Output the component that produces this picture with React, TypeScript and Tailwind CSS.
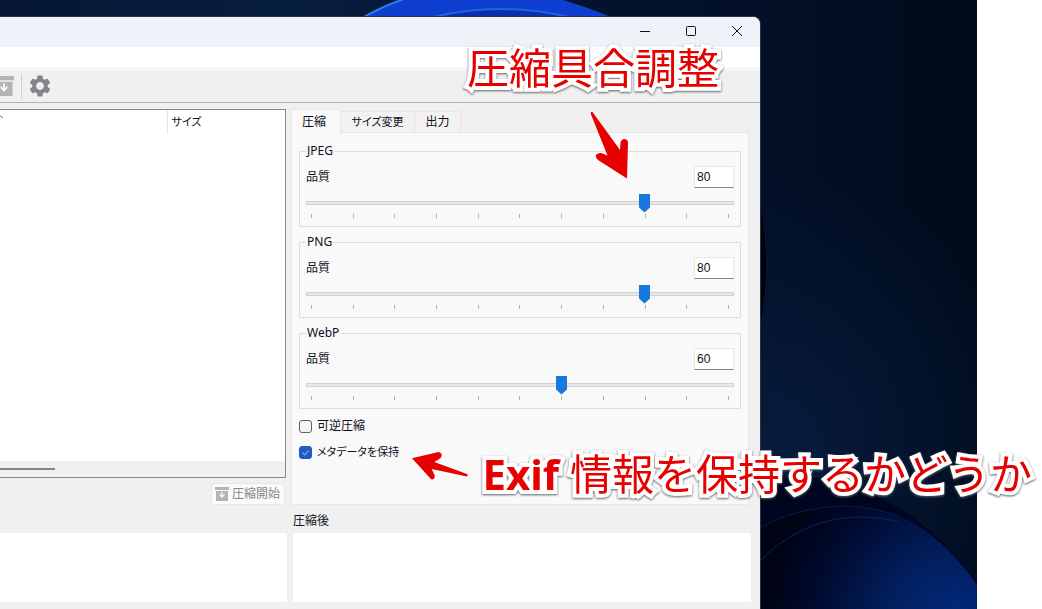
import { useState } from "react";
import type { ReactNode } from "react";
import { MdSettings } from "react-icons/md";

const ticks = [0, 1, 2, 3, 4, 5, 6, 7, 8, 9, 10];

const Wallpaper = () => {
  return (
    <svg
      className="absolute inset-0 h-full w-full"
      viewBox="0 0 977 609"
      preserveAspectRatio="xMaxYMin slice"
      aria-hidden="true"
    >
      <defs>
        <linearGradient id="sky" x1="0" y1="0" x2="977" y2="0" gradientUnits="userSpaceOnUse">
          <stop offset="0" stopColor="#051733" />
          <stop offset="0.3" stopColor="#071d40" />
          <stop offset="0.65" stopColor="#03122c" />
          <stop offset="0.78" stopColor="#020f26" />
          <stop offset="1" stopColor="#000b1b" />
        </linearGradient>
        <radialGradient id="glow" cx="770" cy="450" r="280" gradientUnits="userSpaceOnUse">
          <stop offset="0" stopColor="#071b3c" />
          <stop offset="1" stopColor="#071b3c" stopOpacity="0" />
        </radialGradient>
        <radialGradient id="petal" cx="955" cy="625" r="190" gradientUnits="userSpaceOnUse">
          <stop offset="0" stopColor="#032a80" />
          <stop offset="0.35" stopColor="#02205f" />
          <stop offset="0.75" stopColor="#000a2e" />
          <stop offset="1" stopColor="#000314" />
        </radialGradient>
      </defs>
      <rect width="977" height="609" fill="url(#sky)" />
      <rect width="977" height="609" fill="url(#glow)" />
      <path d="M362 18Q385 5 407 -2H556Q588 7 613 18Z" fill="#0f3fd0" />
      <path d="M433 18Q500 0 568 18Z" fill="#0a30b0" />
      <path d="M362 18Q385 5 407 -2" fill="none" stroke="#2a80e6" strokeWidth="2" />
      <path d="M433 17Q500 1 568 17" fill="none" stroke="#1f66dc" strokeWidth="2" />
      <path d="M760 205Q772 265 760 325Z" fill="#00000f" />
      <path d="M760 482Q800 473 840 481Q925 508 977 583V609H760Z" fill="#00061f" />
      <path d="M760 528Q840 488 912 522Q950 545 977 585V609H760Z" fill="url(#petal)" />
      <path d="M760 528Q795 507 845 506Q875 507 900 517" fill="none" stroke="#051c4a" />
      <path d="M760 561Q800 520 855 517Q880 517 900 522" fill="none" stroke="#06265f" />
    </svg>
  );
};

const ArchiveIcon = ({ className }: { className: string }) => {
  return (
    <svg className={className} viewBox="0 0 14 14" aria-hidden="true">
      <path fill="#b4b4b4" d="M0 0h14v3H0zM1 4h12v10H1z" />
      <path fill="#fbfbfb" d="M6.4 5h1.2v3.6l1.8-1.8v1.7L7 11 4.6 8.500V6.800l1.800 1.800z" />
    </svg>
  );
};

const QualityGroup = ({ name, initial }: { name: string; initial: number }) => {
  const [value, setValue] = useState(initial);
  const id = name.toLowerCase();

  return (
    <fieldset className="min-w-0 border border-[#dcdcdc] px-1.5 pb-2">
      <legend className="px-px leading-4">{name}</legend>
      <div className="flex items-center justify-between pt-[7px]">
        <label htmlFor={id}>品質</label>
        <input
          id={id}
          type="text"
          value={value}
          onChange={(e) => setValue(Number(e.target.value) || 0)}
          className="h-[22px] w-10 border border-[#e8e8e8] border-b-[#868686] bg-white px-0.5 font-['Liberation_Sans','Noto_Sans_CJK_JP',sans-serif] focus:outline-none"
        />
      </div>
      <input
        type="range"
        min={0}
        max={100}
        value={value}
        aria-label={`${name} 品質`}
        onChange={(e) => setValue(Number(e.target.value))}
        className="mt-[5px] block h-[19px] w-full appearance-none bg-transparent focus:outline-none [&::-webkit-slider-runnable-track]:h-1 [&::-webkit-slider-runnable-track]:border [&::-webkit-slider-runnable-track]:border-[#d2d2d2] [&::-webkit-slider-runnable-track]:bg-[#e8e8e8] [&::-webkit-slider-thumb]:-mt-2 [&::-webkit-slider-thumb]:h-[19px] [&::-webkit-slider-thumb]:w-[11px] [&::-webkit-slider-thumb]:appearance-none [&::-webkit-slider-thumb]:bg-[#1778de] [&::-webkit-slider-thumb]:[clip-path:polygon(0_0,100%_0,100%_74%,50%_100%,0_74%)]"
      />
      <div className="mt-0.5 flex h-1 justify-between px-[5px]">
        {ticks.map((t) => (
          <span key={t} className="w-px bg-[#b0b0b0]" />
        ))}
      </div>
    </fieldset>
  );
};

const CheckOption = ({ label, initial, className }: { label: string; initial: boolean; className?: string }) => {
  const [checked, setChecked] = useState(initial);

  return (
    <label className={`flex h-[26px] items-center gap-[5px] ${className ?? ""}`}>
      <span className="relative flex">
        <input
          type="checkbox"
          checked={checked}
          onChange={(e) => setChecked(e.target.checked)}
          className="size-[13px] appearance-none rounded-[3px] border border-[#62606c] bg-[#f5f5f5] checked:border-[#2459c4] checked:bg-[#2459c4]"
        />
        {checked && (
          <svg className="pointer-events-none absolute inset-0" viewBox="0 0 13 13" aria-hidden="true">
            <path d="M3.500 6.800L5.600 8.800 9.800 4.700" fill="none" stroke="#a9dcff" />
          </svg>
        )}
      </span>
      {label}
    </label>
  );
};

const TitleButton = ({ label, children }: { label: string; children: ReactNode }) => {
  return (
    <button type="button" aria-label={label} className="flex w-[46px] items-center justify-center pb-0.5">
      <svg width="12" height="12" viewBox="0 0 12 12" fill="none" stroke="#10101c" aria-hidden="true">
        {children}
      </svg>
    </button>
  );
};

const Caption = ({ className, children }: { className: string; children: ReactNode }) => {
  return (
    <p
      className={`pointer-events-none absolute whitespace-nowrap text-[42px] leading-[48px] text-[#e60000] [-webkit-text-stroke:8px_white] [paint-order:stroke_fill] [filter:drop-shadow(0_1px_1px_#606060)] ${className}`}
    >
      {children}
    </p>
  );
};

export default function App() {
  const tab = "border border-b-0 border-[#e6e6e6] text-center";

  return (
    <div className="relative min-h-screen overflow-hidden bg-white font-['Noto_Sans','Noto_Sans_CJK_JP',sans-serif] text-xs text-[#10101c]">
      <div className="relative mr-[65px] flex min-h-screen pr-[216px] pt-4">
        <Wallpaper />

        <div className="relative flex flex-1 flex-col overflow-hidden rounded-tr-lg border-r border-t border-[#30343e] bg-[#f0f0f0]">
          <header className="flex h-[30px] justify-end bg-[#f0f2f9]">
            <TitleButton label="最小化">
              <path d="M1 6.500h10" />
            </TitleButton>
            <TitleButton label="最大化">
              <rect x="1.500" y="1.500" width="9" height="9" rx="1" />
            </TitleButton>
            <TitleButton label="閉じる">
              <path d="M1 1l10 10M11 1L1 11" />
            </TitleButton>
          </header>
          <div className="h-[22px] border-b border-[#f0f0f0] bg-white" />
          <div className="flex h-[34px] items-center border-b border-t border-b-[#b0b0b0] border-t-white">
            <button type="button" aria-label="圧縮開始" disabled className="-ml-1.5">
              <ArchiveIcon className="size-5" />
            </button>
            <span className="ml-[7px] h-6 w-px bg-[#cfcfcf]" />
            <button type="button" aria-label="設定" className="ml-[5px]">
              <MdSettings className="size-[26px] text-[#84858a]" />
            </button>
          </div>

          <main className="flex gap-[5px] pr-[11px] pt-1.5">
            <section className="flex min-w-0 flex-1 flex-col items-end gap-[5px]">
              <div className="flex w-full flex-1 flex-col border border-l-0 border-[#868686] bg-white">
                <table className="w-full border-collapse">
                  <thead>
                    <tr className="h-6">
                      <th className="border-r border-[#e5e5e5] p-0">
                        <svg className="mb-3 h-1.5 w-[3px]" viewBox="0 0 3 6" fill="none" stroke="#555" aria-hidden="true">
                          <path d="M0 2.500L2.500 5" />
                        </svg>
                      </th>
                      <th className="w-[118px] p-0 pl-1 text-left text-[11px] font-normal [font-feature-settings:'palt']">
                        サイズ
                      </th>
                    </tr>
                  </thead>
                </table>
                <div className="mt-auto flex h-4 items-center bg-[#f0f0f0]">
                  <div className="h-0.5 w-[55px] bg-[#868686]" />
                </div>
              </div>
              <button
                type="button"
                disabled
                className="mr-px flex h-[22px] w-[74px] items-center gap-[3px] rounded border border-[#e6e6e6] bg-[#fafafa] pl-[3px] text-[#868686]"
              >
                <ArchiveIcon className="size-3.5" />
                圧縮開始
              </button>
            </section>

            <section className="w-[458px] [font-feature-settings:'palt']">
              <div role="tablist" className="flex items-end">
                <button
                  type="button"
                  role="tab"
                  aria-selected="true"
                  className={`${tab} relative -mb-px h-6 w-[50px] bg-[#f9f9f9] pr-1`}
                >
                  圧縮
                </button>
                <button type="button" role="tab" className={`${tab} h-[21px] w-[74px] border-l-0 bg-[#f2f2f2] text-[11px]`}>
                  サイズ変更
                </button>
                <button type="button" role="tab" className={`${tab} h-[21px] w-[46px] border-l-0 bg-[#f2f2f2]`}>
                  出力
                </button>
              </div>
              <div className="border border-[#e6e6e6] bg-[#f9f9f9] px-[7px] pb-[39px] pt-2.5">
                <div className="flex flex-col gap-[7px]">
                  <QualityGroup name="JPEG" initial={80} />
                  <QualityGroup name="PNG" initial={80} />
                  <QualityGroup name="WebP" initial={60} />
                </div>
                <div className="pt-1">
                  <CheckOption label="可逆圧縮" initial={false} />
                  <CheckOption label="メタデータを保持" initial={true} className="text-[11px]" />
                </div>
              </div>
            </section>
          </main>

          <div className="flex flex-1 gap-1.5 pb-[7px] pr-[9px] pt-2">
            <div className="mt-5 flex-1 bg-white" />
            <div className="flex w-[458px] flex-col">
              <h2 className="h-5 leading-4">圧縮後</h2>
              <div className="flex-1 bg-white" />
            </div>
          </div>
        </div>
      </div>

      <Caption className="right-[323px] top-[44px]">圧縮具合調整</Caption>
      <Caption className="right-[10px] top-[450px]">
        <span className="font-bold">Exif</span> 情報を保持するかどうか
      </Caption>
      <svg className="absolute right-[412px] top-[110px] h-[70px] w-10" viewBox="590 110 40 70" aria-hidden="true">
        <path
          fill="#e60000"
          d="M592.500 112L620 150L620.500 142.500Q621.500 139 624.500 139Q628 139.500 628 143L627 178.500L598 160Q595 157 596 155Q598 152.500 601 153L607.500 155.500L590.800 114Q590.500 111 592.500 112Z"
        />
      </svg>
      <svg className="absolute right-[572px] top-[450px] h-8 w-[60px]" viewBox="410 450 60 32" aria-hidden="true">
        <path
          fill="#e60000"
          d="M412 458.300L438.500 452Q441.500 452.500 441.700 455Q441.500 457.500 440 458.500L434.300 462L467 474Q468.500 475.500 467 476.500L431.700 469L434.700 475.500Q435 478.500 432.500 479.500Q431 479.500 430 478Z"
        />
      </svg>
    </div>
  );
}
